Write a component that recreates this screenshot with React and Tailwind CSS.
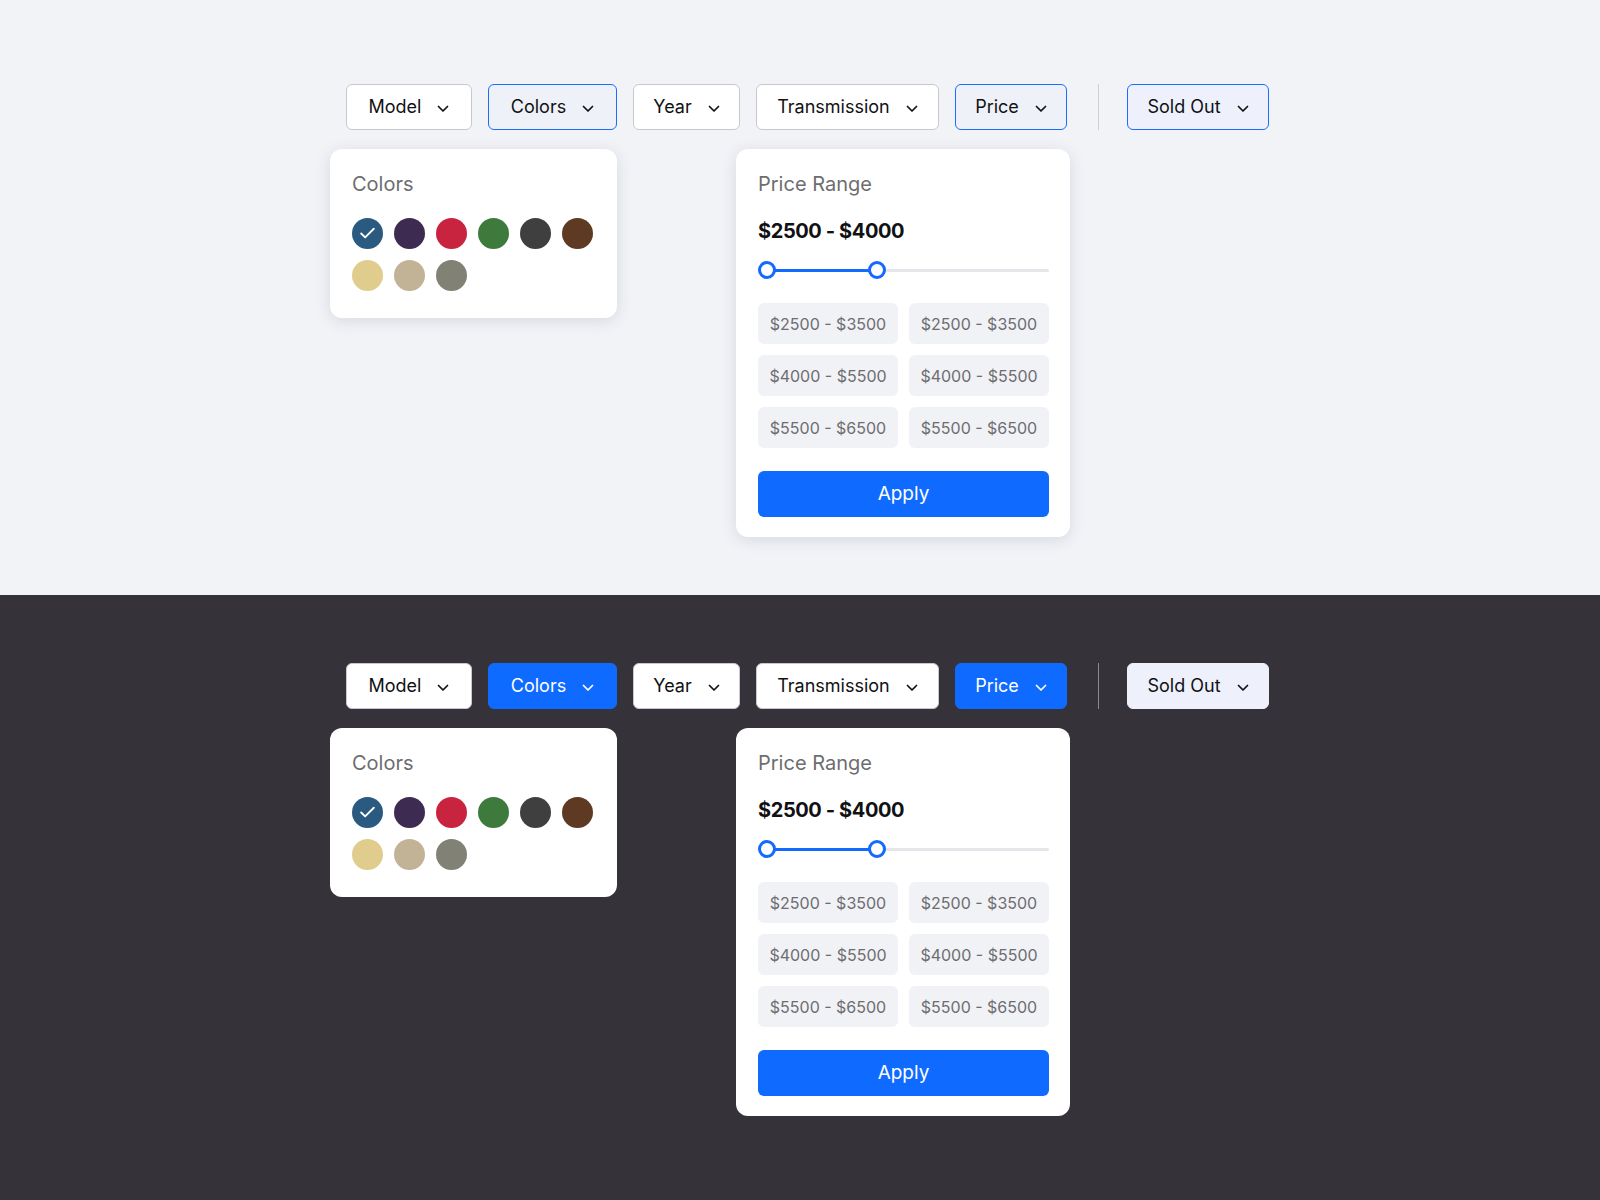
import { Check } from 'lucide-react'

const FILTERS = [
  { label: 'Model',        w: 'w-[126px]', kind: 'plain'  },
  { label: 'Colors',       w: 'w-[129px]', kind: 'active' },
  { label: 'Year',         w: 'w-[107px]', kind: 'plain'  },
  { label: 'Transmission', w: 'w-[183px]', kind: 'plain'  },
  { label: 'Price',        w: 'w-[112px]', kind: 'active' },
]

const SWATCHES = ['#2a5a7f', '#3d2b51', '#c9243f', '#3e7a3c', '#3f3f40', '#5d3a21', '#e0cc8c', '#c3b396', '#818275']

const RANGES = ['$2500 - $3500', '$2500 - $3500', '$4000 - $5500', '$4000 - $5500', '$5500 - $6500', '$5500 - $6500']

const BTN = {
  light: {
    plain:  'bg-white border-[#c9c9cd] text-[#111114]',
    active: 'bg-[#eff1f8] border-[#1a6dff] text-[#111114]',
    soft:   'bg-[#eef1fc] border-[#1a6dff] text-[#111114]',
  },
  dark: {
    plain:  'bg-white border-[#c9c9cd] text-[#111114]',
    active: 'bg-[#0f6bff] border-[#0f6bff] text-white',
    soft:   'bg-[#eef0fb] border-[#eef0fb] text-[#111114]',
  },
}

function Chevron() {
  return (
    <svg width="12" height="8" viewBox="0 0 12 8" fill="none" className="mt-[3px]">
      <path d="M1.5 1.5 L6 6 L10.5 1.5" stroke="currentColor" strokeWidth="1.7" strokeLinecap="round" strokeLinejoin="round" />
    </svg>
  )
}

function FilterButton({ label, w, kind, theme }) {
  return (
    <button className={`${w} ${BTN[theme][kind]} h-[46px] border rounded-[6px] flex items-center justify-center gap-4 text-[18px] leading-none`}>
      <span>{label}</span>
      <Chevron />
    </button>
  )
}

function ColorsPanel({ shadow }) {
  return (
    <div className={`w-[287px] h-[169px] bg-white rounded-[12px] pl-[22px] pt-[23px] ${shadow}`}>
      <p className="text-[20px] leading-[24px] text-[#6d6d70]">Colors</p>
      <div className="mt-[22px] grid grid-cols-[repeat(6,31px)] gap-[11px]">
        {SWATCHES.map((c, i) => (
          <span key={i} className="w-[31px] h-[31px] rounded-full flex items-center justify-center" style={{ backgroundColor: c }}>
            {i === 0 && <Check size={19} strokeWidth={2.3} className="text-white" />}
          </span>
        ))}
      </div>
    </div>
  )
}

function PricePanel({ shadow }) {
  return (
    <div className={`w-[334px] bg-white rounded-[12px] px-[22px] pt-[23px] pb-[20px] ${shadow}`}>
      <p className="text-[20px] leading-[24px] text-[#6d6d70]">Price Range</p>
      <p className="mt-[21px] text-[20px] leading-[28px] font-bold tracking-[-0.4px] text-[#111114]">$2500 - $4000</p>

      {/* range slider: gray track, blue fill between the two knobs */}
      <div className="relative mt-[16px] h-[18px] w-[291px]">
        <div className="absolute left-0 right-0 top-[8px] h-[3px] bg-[#e6e6ea] rounded-full" />
        <div className="absolute left-[9px] w-[110px] top-[8px] h-[3px] bg-[#1469ff]" />
        <span className="absolute left-0 top-0 w-[18px] h-[18px] rounded-full bg-white border-[3px] border-[#1469ff]" />
        <span className="absolute left-[110px] top-0 w-[18px] h-[18px] rounded-full bg-white border-[3px] border-[#1469ff]" />
      </div>

      <div className="mt-[24px] grid grid-cols-2 gap-[11px] w-[291px]">
        {RANGES.map((r, i) => (
          <div key={i} className="h-[41px] rounded-[6px] bg-[#f1f2f6] flex items-center justify-center text-[16px] text-[#6d6d70]">
            {r}
          </div>
        ))}
      </div>

      <button className="mt-[23px] w-[291px] h-[46px] rounded-[6px] bg-[#0f6bff] text-white text-[19px]">Apply</button>
    </div>
  )
}

function FilterSection({ theme }) {
  const dark = theme === 'dark'
  const shadow = dark ? '' : 'shadow-[0_3px_16px_rgba(40,50,80,0.13)]'
  return (
    <section className={dark ? 'bg-[#35323a] pt-[68px] pb-[84px]' : 'bg-[#f2f3f7] pt-[84px] pb-[58px]'}>
      <div className="flex items-center gap-4 pl-[346px]">
        {FILTERS.map(f => <FilterButton key={f.label} {...f} theme={theme} />)}
        <div className={`ml-[15px] mr-[12px] w-px h-[46px] ${dark ? 'bg-[#8b8990]' : 'bg-[#cfcfd4]'}`} />
        <FilterButton label="Sold Out" w="w-[142px]" kind="soft" theme={theme} />
      </div>
      <div className="flex items-start pl-[330px] mt-[19px]">
        <ColorsPanel shadow={shadow} />
        <div className="ml-[119px]">
          <PricePanel shadow={shadow} />
        </div>
      </div>
    </section>
  )
}

export default function App() {
  return (
    <div className="w-[1600px] min-h-[1200px] bg-[#35323a] font-['Inter',sans-serif]">
      <FilterSection theme="light" />
      <FilterSection theme="dark" />
    </div>
  )
}
